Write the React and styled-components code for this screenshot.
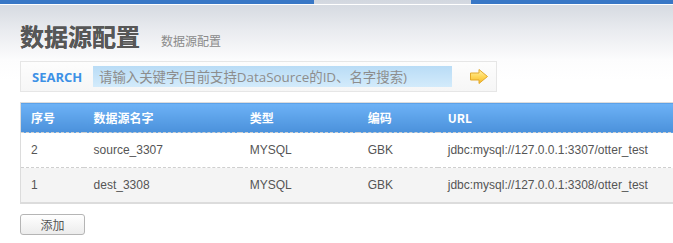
import React from 'react'
import styled, { createGlobalStyle } from 'styled-components'

const GlobalStyle = createGlobalStyle`
    html, body {
        margin: 0;
        padding: 0;
        background: #fff;
    }
    body {
        font-family: Arial, "Liberation Sans", "Noto Sans CJK SC", sans-serif;
        font-size: 12px;
        color: #555;
    }
`

const rows = [
    { id: 2, name: 'source_3307', type: 'MYSQL', code: 'GBK', url: 'jdbc:mysql://127.0.0.1:3307/otter_test' },
    { id: 1, name: 'dest_3308', type: 'MYSQL', code: 'GBK', url: 'jdbc:mysql://127.0.0.1:3308/otter_test' },
]

const ArrowIcon = () => (
    <svg width="20" height="17" viewBox="0 0 20 17">
        <defs>
            <linearGradient id="arr" x1="0" y1="0" x2="0" y2="1">
                <stop offset="0" stopColor="#fff3b0" />
                <stop offset="0.5" stopColor="#ffd85a" />
                <stop offset="1" stopColor="#f5b82a" />
            </linearGradient>
        </defs>
        <path d="M1.5 5 H10 V1.5 L18.5 8.5 L10 15.5 V12 H1.5 Z" fill="url(#arr)" stroke="#e3a92a" strokeWidth="1" strokeLinejoin="round" />
    </svg>
)

const App = () => {
    return (
        <Page>
            <GlobalStyle />
            <TopBar>
                <TopSeg $blue />
                <TopSeg $w="157px" />
                <TopSeg $blue $grow />
            </TopBar>
            <Content>
                <TitleRow>
                    <Title>数据源配置</Title>
                    <SubTitle>数据源配置</SubTitle>
                </TitleRow>
                <SearchBox>
                    <SearchLabel>SEARCH</SearchLabel>
                    <SearchInput placeholder="请输入关键字(目前支持DataSource的ID、名字搜索)" />
                    <GoButton><ArrowIcon /></GoButton>
                </SearchBox>
                <Table>
                    <thead>
                        <tr>
                            <Th $w="63px">序号</Th>
                            <Th $w="156px">数据源名字</Th>
                            <Th $w="118px">类型</Th>
                            <Th $w="80px">编码</Th>
                            <Th $w="283px">URL</Th>
                        </tr>
                    </thead>
                    <tbody>
                        {rows.map((r, i) => (
                            <Tr key={r.id} $alt={i % 2 === 1} $last={i === rows.length - 1}>
                                <Td>{r.id}</Td>
                                <Td>{r.name}</Td>
                                <Td>{r.type}</Td>
                                <Td>{r.code}</Td>
                                <Td>{r.url}</Td>
                            </Tr>
                        ))}
                    </tbody>
                </Table>
                <AddButton>添加</AddButton>
            </Content>
        </Page>
    )
}

export default App

const Page = styled.div`
    width: 673px;
    height: 243px;
    overflow: hidden;
    background: linear-gradient(to bottom, #d2d7df 0px, #e9ebef 30px, #fcfcfd 60px, #fff 80px);
`
const TopBar = styled.div`
    display: flex;
    height: 4px;
    border-bottom: 1px solid #fff;
`
const TopSeg = styled.div`
    width: ${p => p.$w || '314px'};
    flex: ${p => (p.$grow ? 1 : 'none')};
    background: ${p => (p.$blue ? '#3877c6' : 'transparent')};
`
const Content = styled.div`
    padding: 0 0 0 20px;
`
const TitleRow = styled.div`
    display: flex;
    align-items: flex-end;
    height: 46px;
    padding-bottom: 1px;
    box-sizing: border-box;
`
const Title = styled.h1`
    margin: 0;
    font-size: 24px;
    line-height: 28px;
    font-weight: bold;
    color: #575757;
    letter-spacing: 0;
    font-family: "Noto Sans CJK SC", sans-serif;
    text-shadow: 0 0 0.6px #575757;
`
const SubTitle = styled.span`
    margin-left: 21px;
    font-size: 12px;
    line-height: 18px;
    color: #8a8a8a;
    font-family: "Noto Sans CJK SC", sans-serif;
`
const SearchBox = styled.div`
    display: flex;
    align-items: center;
    width: 477px;
    height: 31px;
    margin-top: 10px;
    box-sizing: border-box;
    border: 1px solid #e6e6e6;
    background: linear-gradient(to bottom, #fdfdfd, #f6f6f6);
`
const SearchLabel = styled.span`
    width: 72px;
    padding-left: 11px;
    box-sizing: border-box;
    font-weight: bold;
    font-size: 13px;
    color: #3d91e6;
    font-family: "Open Sans", "Liberation Sans", sans-serif;
`
const SearchInput = styled.input`
    width: 359px;
    height: 21px;
    box-sizing: border-box;
    border: none;
    outline: none;
    padding: 0 0 0 6px;
    background: linear-gradient(to bottom, #b9dcf6, #d3ebfb);
    font-size: 13.4px;
    font-family: "Open Sans", "Noto Sans CJK SC", sans-serif;
    &::placeholder {
        color: #8d8d8d;
    }
`
const GoButton = styled.span`
    display: flex;
    margin-left: 17px;
`
const Table = styled.table`
    width: 701px;
    table-layout: fixed;
    margin-top: 10px;
    border-collapse: collapse;
    border-top: 1px solid #dcdcdc;
    border-left: 1px solid #dcdcdc;
    font-size: 12px;
`
const Th = styled.th`
    width: ${p => p.$w || 'auto'};
    box-sizing: border-box;
    height: 30px;
    padding: 0 0 0 10px;
    text-align: left;
    color: #fff;
    font-weight: bold;
    font-family: "Noto Sans CJK SC", sans-serif;
    background: linear-gradient(to bottom, #6db2f6, #4b91db);
    border-bottom: 1px dashed #cfcfcf;
`
const Tr = styled.tr`
    background: ${p => (p.$alt ? '#f4f4f4' : '#fff')};
    border-bottom: ${p => (p.$last ? '2px solid #dcdcdc' : '1px dashed #cfcfcf')};
`
const Td = styled.td`
    height: 34px;
    padding: 0 0 0 10px;
    color: #555;
    white-space: nowrap;
    font-family: Arial, "Liberation Sans", sans-serif;
`
const AddButton = styled.button`
    display: block;
    width: 65px;
    height: 21px;
    margin-top: 10px;
    padding: 0;
    border: 1px solid #b5b5b5;
    border-radius: 3px;
    background: linear-gradient(to bottom, #ffffff, #ececec);
    font-size: 12px;
    color: #555;
    font-family: "Noto Sans CJK SC", sans-serif;
`
